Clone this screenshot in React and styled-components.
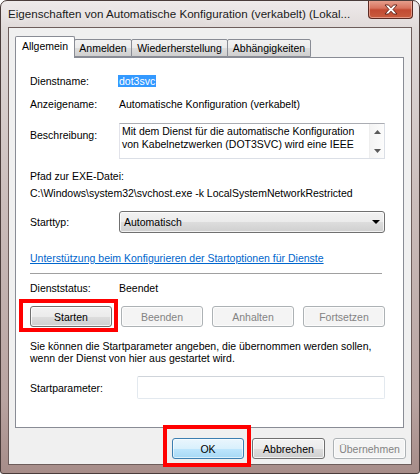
import React from "react";
import styled, { createGlobalStyle } from "styled-components";

const Global = createGlobalStyle`
  html, body { margin: 0; padding: 0; background: #ffffff; }
  #root { width: 420px; height: 474px; }
`;

const UI = `"Liberation Sans", Arial, sans-serif`;

const Window = styled.div`
  width: 420px;
  height: 474px;
  box-sizing: border-box;
  border: 1px solid #4a3c3a;
  border-radius: 7px 7px 3px 3px;
  background: linear-gradient(180deg, #eeeaea 0px, #dfd9d8 30px, #cbbdbb 200px, #b8a3a0 400px, #a68c88 474px);
  display: flex;
  flex-direction: column;
  overflow: hidden;
  font-family: ${UI};
`;

const TitleBar = styled.div`
  height: 26px;
  display: flex;
  align-items: flex-start;
  justify-content: space-between;
  padding-left: 7px;
  flex-shrink: 0;
`;

const Title = styled.div`
  font-family: ${UI};
  font-size: 11.6px;
  color: #1a1a1a;
  margin-top: 6px;
  white-space: nowrap;
  text-shadow: 0 0 6px rgba(255,255,255,0.9);
`;

const CloseBtn = styled.div`
  width: 45px;
  height: 19px;
  margin-right: 6px;
  margin-top: -1px;
  box-sizing: border-box;
  border: 1px solid #5b2a22;
  border-top: none;
  border-radius: 0 0 4px 4px;
  background: linear-gradient(180deg, #e8a493 0%, #d8735e 45%, #c24a32 55%, #c85c3e 100%);
  box-shadow: inset 0 0 0 1px rgba(255,210,200,0.5);
  display: flex;
  align-items: center;
  justify-content: center;
`;

const Client = styled.div`
  flex: 1;
  margin: 0 7px 8px 7px;
  box-sizing: border-box;
  border: 1px solid #6d5d5b;
  background: #f0f0f0;
  padding: 8px 7px 0 6px;
  display: flex;
  flex-direction: column;
`;

const TabStrip = styled.div`
  display: flex;
  align-items: flex-end;
  height: 21px;
  position: relative;
  z-index: 1;
`;

const Tab = styled.div`
  box-sizing: border-box;
  height: ${p => (p.$active ? 22 : 18)}px;
  width: ${p => p.$w}px;
  margin-bottom: ${p => (p.$active ? -1 : 0)}px;
  border: 1px solid #898c95;
  border-bottom: ${p => (p.$active ? "none" : "1px solid #898c95")};
  border-radius: 2px 2px 0 0;
  margin-left: ${p => (p.$active ? 0 : -1)}px;
  background: ${p => (p.$active ? "#ffffff" : "linear-gradient(180deg, #f2f2f2 0%, #ebebeb 50%, #dddddd 51%, #cfcfcf 100%)")};
  font-size: 10.5px;
  color: #000;
  display: flex;
  align-items: center;
  justify-content: center;
  padding-bottom: ${p => (p.$active ? 3 : 0)}px;
`;

const Panel = styled.div`
  box-sizing: border-box;
  height: 371px;
  border: 1px solid #898c95;
  background: #ffffff;
  padding: 16px 18px 0 14px;
  display: flex;
  flex-direction: column;
`;

const Row = styled.div`
  display: flex;
  align-items: ${p => p.$align || "center"};
  height: ${p => p.$h}px;
  margin-top: ${p => p.$top || 0}px;
  font-size: 10.5px;
  color: #000;
  flex-shrink: 0;
`;

const Label = styled.div`
  width: ${p => p.$w || 89}px;
  flex-shrink: 0;
  margin-top: ${p => p.$top || 0}px;
  white-space: nowrap;
`;

const Selected = styled.span`
  background: #3399ff;
  color: #ffffff;
  padding: 0 1px;
  margin-left: -1px;
  line-height: 12px;
`;

const TextArea = styled.div`
  flex: 1;
  height: 36px;
  box-sizing: border-box;
  border: 1px solid #dbdfe6;
  border-top-color: #abadb3;
  border-left-color: #e2e3ea;
  display: flex;
  background: #fff;
`;

const AreaText = styled.div`
  flex: 1;
  padding: 1px 0 0 2px;
  line-height: 12.5px;
  font-size: 10.5px;
  white-space: nowrap;
  overflow: hidden;
`;

const ScrollBar = styled.div`
  width: 15px;
  background: linear-gradient(90deg, #f4f4f4, #fcfcfc);
  border-left: 1px solid #eeeeee;
  display: flex;
  flex-direction: column;
  justify-content: space-between;
  align-items: center;
  padding: 6px 0 5px;
  box-sizing: border-box;
`;

const Combo = styled.div`
  flex: 1;
  height: 22px;
  box-sizing: border-box;
  border: 1px solid #707070;
  border-radius: 3px;
  background: linear-gradient(180deg, #f2f2f2 0%, #ebebeb 50%, #dddddd 51%, #cfcfcf 100%);
  box-shadow: inset 0 0 0 1px rgba(255,255,255,0.7);
  display: flex;
  align-items: center;
  justify-content: space-between;
  padding: 0 4px 0 4px;
`;

const Link = styled.a`
  color: #0066cc;
  text-decoration: underline;
  cursor: pointer;
  white-space: nowrap;
`;

const Separator = styled.div`
  height: 1px;
  margin-top: ${p => p.$top}px;
  background: #a0a0a0;
  margin-right: 3px;
  flex-shrink: 0;
`;

const ButtonGrid = styled.div`
  display: grid;
  grid-template-columns: repeat(4, 1fr);
  column-gap: 9px;
  margin-top: ${p => p.$top}px;
  height: 21px;
  flex-shrink: 0;
`;

const Button = styled.div`
  position: relative;
  box-sizing: border-box;
  height: 21px;
  width: ${p => (p.$w ? p.$w + "px" : "auto")};
  border: 1px solid ${p => (p.$disabled ? "#adb2b5" : p.$default ? "#3c7fb1" : "#707070")};
  border-radius: 3px;
  background: ${p =>
    p.$disabled
      ? "#f4f4f4"
      : p.$default
      ? "linear-gradient(180deg, #eaf6fd 0%, #d9f0fc 50%, #bee6fd 51%, #a7d9f5 100%)"
      : "linear-gradient(180deg, #f2f2f2 0%, #ebebeb 50%, #dddddd 51%, #cfcfcf 100%)"};
  box-shadow: inset 0 0 0 1px ${p => (p.$default ? "rgba(255,255,255,0.6)" : "rgba(255,255,255,0.75)")};
  color: ${p => (p.$disabled ? "#838383" : "#000")};
  font-size: 10.5px;
  display: flex;
  align-items: center;
  justify-content: center;
  font-family: ${UI};
`;

const Highlight = styled.div`
  position: absolute;
  left: ${p => p.$l}px;
  top: ${p => p.$t}px;
  right: ${p => p.$r}px;
  bottom: ${p => p.$b}px;
  border: 4px solid #ff0000;
  pointer-events: none;
`;

const Para = styled.div`
  margin-top: ${p => p.$top}px;
  font-size: 10.5px;
  line-height: 11.5px;
  color: #000;
  flex-shrink: 0;
`;

const Field = styled.div`
  flex: 1;
  height: 23px;
  box-sizing: border-box;
  border: 1px solid #e3e9ef;
  border-top-color: #cfd4da;
  border-radius: 2px;
  background: #fff;
  margin-left: -1px;
`;

const Footer = styled.div`
  display: flex;
  justify-content: flex-end;
  gap: 8px;
  margin-top: 10px;
  padding-right: 0;
  margin-right: -2px;
`;

const Arrow = ({ up }) => (
  <svg width="7" height="4" viewBox="0 0 7 4">
    <path d={up ? "M0 4 L3.5 0 L7 4 Z" : "M0 0 L7 0 L3.5 4 Z"} fill="#5a5a5a" />
  </svg>
);

const CloseX = () => (
  <svg width="14" height="11" viewBox="0 0 14 11">
    <path
      d="M1 1 L4.5 1 L7 3.8 L9.5 1 L13 1 L9 5.5 L13 10 L9.5 10 L7 7.2 L4.5 10 L1 10 L5 5.5 Z"
      fill="#ffffff"
      stroke="#5a1e14"
      strokeWidth="0.9"
      strokeLinejoin="round"
    />
  </svg>
);

export default function App() {
  return (
    <>
      <Global />
      <Window>
        <TitleBar>
          <Title>Eigenschaften von Automatische Konfiguration (verkabelt) (Lokal...</Title>
          <CloseBtn>
            <CloseX />
          </CloseBtn>
        </TitleBar>
        <Client>
          <TabStrip>
            <Tab $active $w={60}>Allgemein</Tab>
            <Tab $w={58}>Anmelden</Tab>
            <Tab $w={97}>Wiederherstellung</Tab>
            <Tab $w={84}>Abhängigkeiten</Tab>
          </TabStrip>
          <Panel>
            <Row $h={14} $top={0}>
              <Label>Dienstname:</Label>
              <Selected>dot3svc</Selected>
            </Row>
            <Row $h={14} $top={9}>
              <Label>Anzeigename:</Label>
              <span>Automatische Konfiguration (verkabelt)</span>
            </Row>
            <Row $h={36} $top={12} $align="flex-start">
              <Label $top={6}>Beschreibung:</Label>
              <TextArea>
                <AreaText>
                  Mit dem Dienst für die automatische Konfiguration
                  <br />
                  von Kabelnetzwerken (DOT3SVC) wird eine IEEE
                </AreaText>
                <ScrollBar>
                  <Arrow up />
                  <Arrow />
                </ScrollBar>
              </TextArea>
            </Row>
            <Row $h={14} $top={10}>
              <Label>Pfad zur EXE-Datei:</Label>
            </Row>
            <Row $h={14} $top={3}>
              <span>C:\Windows\system32\svchost.exe -k LocalSystemNetworkRestricted</span>
            </Row>
            <Row $h={22} $top={11}>
              <Label>Starttyp:</Label>
              <Combo>
                <span>Automatisch</span>
                <svg width="8" height="4" viewBox="0 0 8 4">
                  <path d="M0 0 L8 0 L4 4 Z" fill="#000" />
                </svg>
              </Combo>
            </Row>
            <Row $h={14} $top={18}>
              <Link>Unterstützung beim Konfigurieren der Startoptionen für Dienste</Link>
            </Row>
            <Separator $top={8} />
            <Row $h={14} $top={7}>
              <Label>Dienststatus:</Label>
              <span>Beendet</span>
            </Row>
            <ButtonGrid $top={11}>
              <Button>
                Starten
                <Highlight $l={-12} $t={-8} $r={-7} $b={-6} />
              </Button>
              <Button $disabled>Beenden</Button>
              <Button $disabled>Anhalten</Button>
              <Button $disabled>Fortsetzen</Button>
            </ButtonGrid>
            <Para $top={14}>
              Sie können die Startparameter angeben, die übernommen werden sollen,
              <br />
              wenn der Dienst von hier aus gestartet wird.
            </Para>
            <Row $h={23} $top={12}>
              <Label $w={108}>Startparameter:</Label>
              <Field />
            </Row>
          </Panel>
          <Footer>
            <Button $default $w={72}>
              OK
              <Highlight $l={-10} $t={-14} $r={-8} $b={-9} />
            </Button>
            <Button $w={73}>Abbrechen</Button>
            <Button $disabled $w={73}>Übernehmen</Button>
          </Footer>
        </Client>
      </Window>
    </>
  );
}
